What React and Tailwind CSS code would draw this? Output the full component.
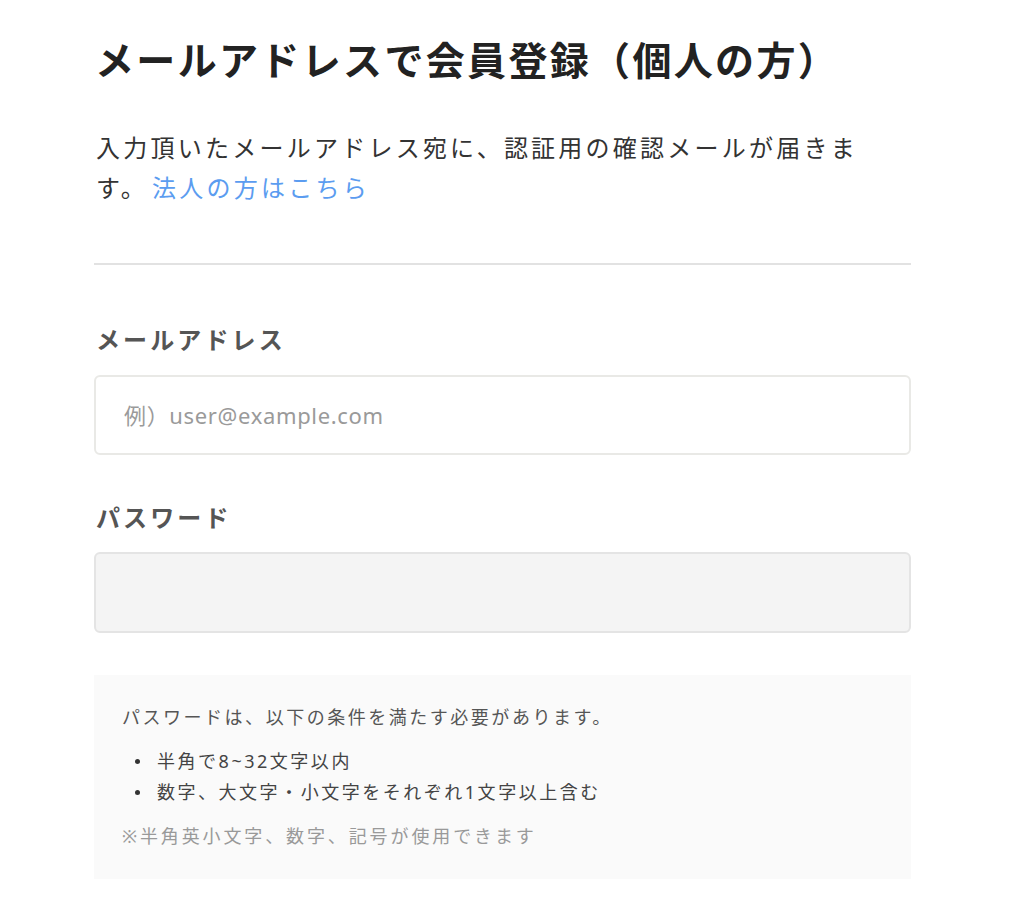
export default function App() {
  const font = { fontFamily: '"Noto Sans", "Noto Sans CJK JP", sans-serif' };
  return (
    <div className="min-h-[906px] bg-white" style={font}>
      <div className="ml-[94px] w-[817px] pt-[35px]">
        <h1 className="text-[39px] leading-[50px] font-bold tracking-[0.06em] text-[#222] pl-[1px]">
          メールアドレスで会員登録（個人の方）
        </h1>
        <p className="mt-[43px] max-w-[800px] pl-[2px] text-[24px] leading-[40px] tracking-[0.135em] text-[#333]">
          入力頂いたメールアドレス宛に、認証用の確認メールが届きます。
          <a className="ml-[4px] text-[#5b9cf0]">法人の方はこちら</a>
        </p>
        <div className="mt-[55px] h-[2px] bg-[#e2e2e2]" />
        <label className="mt-[57px] block pl-[2px] text-[24px] leading-[36px] font-bold tracking-[0.13em] text-[#555]">
          メールアドレス
        </label>
        <div className="mt-[17px] flex h-[80px] items-center rounded-[6px] border-2 border-[#e9e9e6] bg-white pl-[28px]">
          <span className="text-[22px] tracking-[0.03em] text-[#9a9a9a]">例）user@example.com</span>
        </div>
        <label className="mt-[45px] block pl-[2px] text-[24px] leading-[36px] font-bold tracking-[0.13em] text-[#555]">
          パスワード
        </label>
        <div className="mt-[16px] h-[81px] rounded-[6px] border-2 border-[#e4e4e4] bg-[#f4f4f4]" />
        <div className="mt-[42px] bg-[#fafafa] px-[28px] pt-[27px] pb-[27px] text-[18px] tracking-[0.14em]">
          <p className="leading-[31px] text-[#555]">パスワードは、以下の条件を満たす必要があります。</p>
          <ul className="mt-[13px] text-[#444]">
            <li className="flex items-center leading-[31px]">
              <span className="ml-[13px] mr-[17px] h-[5px] w-[5px] rounded-full bg-[#333]" />
              半角で8~32文字以内
            </li>
            <li className="flex items-center leading-[31px]">
              <span className="ml-[13px] mr-[17px] h-[5px] w-[5px] rounded-full bg-[#333]" />
              数字、大文字・小文字をそれぞれ1文字以上含む
            </li>
          </ul>
          <p className="mt-[13px] leading-[31px] tracking-[0.16em] text-[#999]">※半角英小文字、数字、記号が使用できます</p>
        </div>
      </div>
    </div>
  );
}
